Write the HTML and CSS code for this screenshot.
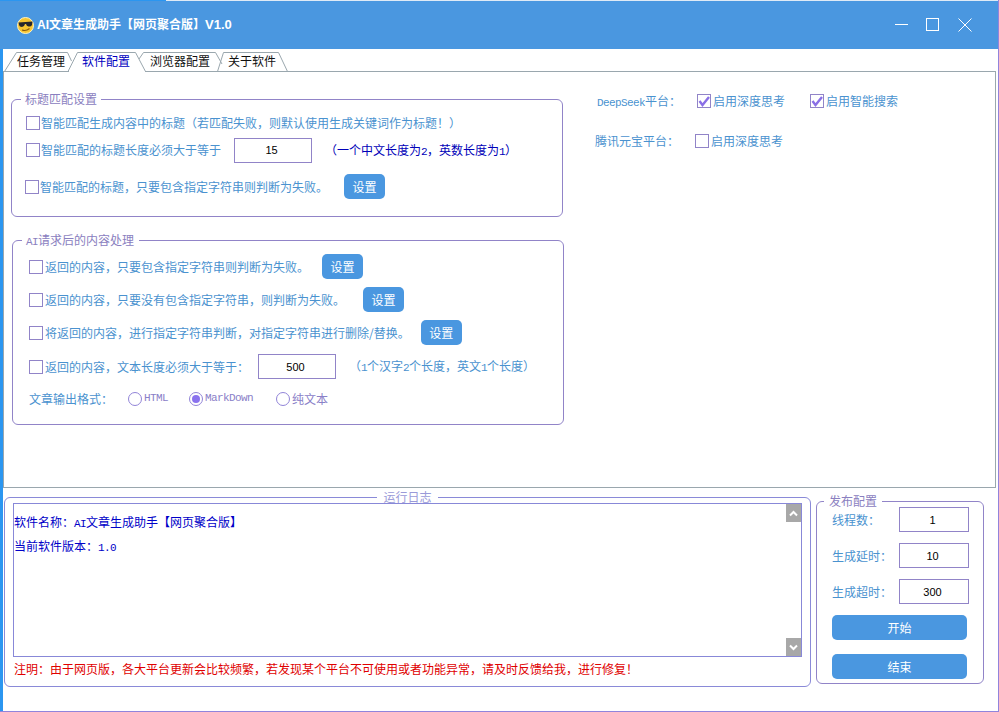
FILE: index.html
```html
<!DOCTYPE html>
<html lang="zh-CN">
<head>
<meta charset="utf-8">
<title>AI文章生成助手</title>
<link rel="stylesheet" href="styles.css">
</head>
<body>
<div class="window">
  <div class="topline"></div>
  <header class="titlebar">
    <svg class="app-icon" width="17" height="17" viewBox="0 0 17 17">
      <circle cx="8.5" cy="8.5" r="8" fill="#f7c531" stroke="#fff3c4" stroke-width="1"/>
      <path d="M1.5 5.5 L15.5 4.5 L15 8 Q14 10 11.5 9.5 Q9.5 9 9 7 L8 7 Q7.5 9.5 5 10 Q2.5 10 2 8 Z" fill="#26262c"/>
      <path d="M5 13 Q9 14.5 12.5 11.5" fill="none" stroke="#8a5a10" stroke-width="1.2"/>
    </svg>
    <h1 class="app-title"><span>AI文章生成助手【网页聚合版】</span><span class="version">V1.0</span></h1>
    <div class="win-controls">
      <svg width="13" height="14" viewBox="0 0 13 14"><path d="M0 6.5H13" stroke="#fff" fill="none"/></svg>
      <svg width="14" height="14" viewBox="0 0 14 14"><rect x="0.5" y="0.5" width="12" height="12" stroke="#fff" fill="none"/></svg>
      <svg width="14" height="14" viewBox="0 0 14 14"><path d="M0.5 0.5L13.5 13.5M13.5 0.5L0.5 13.5" stroke="#fff" fill="none"/></svg>
    </div>
  </header>

  <div class="content">
    <nav class="tabs">
      <svg class="tab-shapes" width="292" height="22" viewBox="0 0 292 22">
        <path d="M1.5 21.5L13.5 2.5H64.5L68.5 11M65 21.5L74.5 2.5H132.5L142.5 21.5" fill="none" stroke="#9aa7ae"/>
        <path d="M136 9L140.5 2.5H212.5L219 14M214.5 21.5L220.5 2.5H275.5L284.5 21.5" fill="none" stroke="#9aa7ae"/>
        <path d="M66 21.5H142" stroke="#fff" fill="none"/>
        <path d="M1 21.5H66" stroke="#9aa7ae" fill="none"/>
      </svg>
      <span class="tab tab-1">任务管理</span>
      <span class="tab tab-2 active">软件配置</span>
      <span class="tab tab-3">浏览器配置</span>
      <span class="tab tab-4">关于软件</span>
    </nav>

    <section class="panel">
      <div class="left-col">
        <fieldset class="group group-title">
          <legend><span>标题匹配设置</span></legend>
          <div class="row r-24">
            <label class="check"><i class="box"></i>智能匹配生成内容中的标题（若匹配失败，则默认使用生成关键词作为标题！）</label>
          </div>
          <div class="row r-24 mt-3">
            <label class="check"><i class="box"></i>智能匹配的标题长度必须大于等于</label>
            <span class="field ml-13 w-78">15</span>
            <span class="note navy ml-13">（一个中文长度为<span class="mono">2</span>，英数长度为<span class="mono">1</span>）</span>
          </div>
          <div class="row r-25 mt-12 out-1">
            <label class="check"><i class="box"></i>智能匹配的标题，只要包含指定字符串则判断为失败。</label>
            <button class="btn ml-16">设置</button>
          </div>
        </fieldset>

        <fieldset class="group group-ai">
          <legend><span><span class="mono">AI</span>请求后的内容处理</span></legend>
          <div class="row r-25">
            <label class="check"><i class="box"></i>返回的内容，只要包含指定字符串则判断为失败。</label>
            <button class="btn ml-13">设置</button>
          </div>
          <div class="row r-25 mt-8">
            <label class="check"><i class="box"></i>返回的内容，只要没有包含指定字符串，则判断为失败。</label>
            <button class="btn ml-18">设置</button>
          </div>
          <div class="row r-25 mt-8">
            <label class="check"><i class="box"></i>将返回的内容，进行指定字符串判断，对指定字符串进行删除/替换。</label>
            <button class="btn ml-11">设置</button>
          </div>
          <div class="row r-25 mt-9">
            <label class="check"><i class="box"></i>返回的内容，文本长度必须大于等于：</label>
            <span class="field ml-9 w-78">500</span>
            <span class="note ml-13">（<span class="mono">1</span>个汉字<span class="mono">2</span>个长度，英文<span class="mono">1</span>个长度）</span>
          </div>
          <div class="row r-25 mt-7">
            <span class="fmt-label">文章输出格式：</span>
            <label class="radio"><i class="dot"></i><span class="mono">HTML</span></label>
            <label class="radio md"><i class="dot on"></i><span class="mono">MarkDown</span></label>
            <label class="radio txt"><i class="dot"></i>纯文本</label>
          </div>
        </fieldset>
      </div>

      <div class="right-col">
        <div class="platform ds">
          <span class="plat-label"><span class="mono">DeepSeek</span>平台：</span>
          <label class="check"><i class="box on"><svg width="12" height="12" viewBox="0 0 12 12"><path d="M1.5 6L4.5 10L11 2" fill="none" stroke="#8a6fe6" stroke-width="2.4"/></svg></i>启用深度思考</label>
          <label class="check ml-25"><i class="box on"><svg width="12" height="12" viewBox="0 0 12 12"><path d="M1.5 6L4.5 10L11 2" fill="none" stroke="#8a6fe6" stroke-width="2.4"/></svg></i>启用智能搜索</label>
        </div>
        <div class="platform yb">
          <span class="plat-label">腾讯元宝平台：</span>
          <label class="check"><i class="box"></i>启用深度思考</label>
        </div>
      </div>
    </section>

    <div class="bottom">
      <fieldset class="log">
        <legend><span>运行日志</span></legend>
        <div class="log-box">
          <div class="log-text">
            <p>软件名称：<span class="mono">AI</span>文章生成助手【网页聚合版】</p>
            <p>当前软件版本：<span class="mono">1.0</span></p>
          </div>
          <div class="scrollbar">
            <span class="sb-btn"><svg width="9" height="7" viewBox="0 0 9 7"><path d="M1 5.5L4.5 2L8 5.5" fill="none" stroke="#fff" stroke-width="2"/></svg></span>
            <span class="sb-btn"><svg width="9" height="7" viewBox="0 0 9 7"><path d="M1 1.5L4.5 5L8 1.5" fill="none" stroke="#fff" stroke-width="2"/></svg></span>
          </div>
        </div>
        <p class="warning">注明：由于网页版，各大平台更新会比较频繁，若发现某个平台不可使用或者功能异常，请及时反馈给我，进行修复！</p>
      </fieldset>

      <fieldset class="publish">
        <legend><span>发布配置</span></legend>
        <div class="pub-row"><span class="pub-label">线程数：</span><span class="field w-70">1</span></div>
        <div class="pub-row"><span class="pub-label">生成延时：</span><span class="field w-70">10</span></div>
        <div class="pub-row"><span class="pub-label">生成超时：</span><span class="field w-70">300</span></div>
        <button class="btn wide">开始</button>
        <button class="btn wide second">结束</button>
      </fieldset>
    </div>
  </div>
</div>
</body>
</html>
```

FILE: styles.css
```css
* { box-sizing: border-box; }
html, body { margin: 0; padding: 0; overflow: hidden; background: #fff; }
body {
  font-family: "Noto Sans CJK SC", "Liberation Sans", sans-serif;
  font-size: 12px;
  line-height: 14px;
  color: #4a92cf;
}
p, h1 { margin: 0; }
i { font-style: normal; }

.window {
  width: 999px;
  height: 712px;
  display: flex;
  flex-direction: column;
  border-right: 1px solid #9184dc;
  border-bottom: 1px solid #9184dc;
}
.topline {
  height: 1px;
  flex: none;
  background: linear-gradient(to right, #2b96f0 166px, #dfeaf6 166px);
}
.titlebar {
  height: 48px;
  flex: none;
  background: #4a97e0;
  display: flex;
  align-items: center;
  padding-left: 17px;
  color: #fff;
}
.app-icon { flex: none; }
.app-title {
  margin-left: 3px;
  font-family: "Liberation Sans", "Noto Sans CJK SC", sans-serif;
  font-size: 12px;
  font-weight: 700;
  display: flex;
}
.version { font-size: 13px; }
.win-controls {
  margin-left: auto;
  margin-right: 26px;
  display: flex;
  gap: 18px;
  align-items: center;
}

.content {
  flex: 1;
  border-left: 3px solid #2b96f0;
  display: flex;
  flex-direction: column;
}

.tabs {
  height: 23px;
  flex: none;
  margin-bottom: -1px;
  display: flex;
  align-items: center;
  position: relative;
  z-index: 1;
  color: #111;
  padding-top: 1px;
}
.tab-shapes { position: absolute; left: 0; top: 1px; }
.tab { position: relative; }
.tab-1 { margin-left: 14px; }
.tab-2 { margin-left: 17px; color: #0000c0; }
.tab-3 { margin-left: 20px; }
.tab-4 { margin-left: 18px; }

.panel {
  width: 993px;
  height: 417px;
  flex: none;
  border: 1px solid #9aa7ae;
  display: flex;
  padding: 20px 0 0 7px;
}
.left-col { width: 553px; flex: none; }
.right-col { margin-left: 30px; padding-top: 0; }

legend { padding: 0; }
fieldset { margin: 0; min-width: 0; }

.group {
  border: 1px solid #9184c8;
  border-radius: 6px;
  padding-bottom: 0;
  padding-right: 0;
}
.group legend { color: #8a80c0; }
.group-title {
  width: 552px;
  height: 125px;
  padding-left: 14px;
  padding-top: 5px;
}
.group-title legend { margin-left: -5px; padding: 0 4px; }
.group-title .check { gap: 1px; }
.group-ai {
  width: 552px;
  height: 192px;
  margin: 16px 0 0 1px;
  padding-left: 16px;
  padding-top: 6px;
}
.group-ai legend { margin-left: -7px; padding: 0 5px 0 4px; }

.row { display: flex; align-items: center; }
.r-24 { height: 24px; }
.r-25 { height: 25px; }
.out-1 { margin-left: -1px; }
.mt-3 { margin-top: 3px; }
.mt-7 { margin-top: 7px; }
.mt-8 { margin-top: 8px; }
.mt-9 { margin-top: 9px; }
.mt-12 { margin-top: 12px; }
.ml-9 { margin-left: 9px; }
.ml-11 { margin-left: 11px; }
.ml-13 { margin-left: 13px; }
.ml-16 { margin-left: 16px; }
.ml-18 { margin-left: 18px; }
.ml-25 { margin-left: 25px; }

.check { display: flex; align-items: center; gap: 2px; white-space: nowrap; }
.box {
  width: 14px;
  height: 14px;
  flex: none;
  border: 1px solid #9184c8;
  display: flex;
  align-items: center;
  justify-content: center;
}

.field {
  height: 25px;
  flex: none;
  border: 1px solid #9184c8;
  padding-right: 3px;
  display: flex;
  align-items: center;
  justify-content: center;
  font-family: "Liberation Sans", sans-serif;
  font-size: 11px;
  color: #000;
}
.w-78 { width: 78px; }
.w-70 { width: 70px; }

.note { white-space: nowrap; }
.navy { color: #0000b8; }
.mono {
  font-family: "Liberation Mono", monospace;
  font-size: 11px;
  letter-spacing: -0.6px;
  line-height: 1;
}

.btn {
  width: 41px;
  height: 25px;
  flex: none;
  padding: 0;
  border: 0;
  border-radius: 5px;
  background: #4a97e0;
  color: #fff;
  font: inherit;
}

.fmt-label { width: 99px; flex: none; }
.radio { display: flex; align-items: center; gap: 2px; color: #8a80c8; }
.md { margin-left: 21px; }
.txt { margin-left: 23px; }
.dot {
  width: 14px;
  height: 14px;
  flex: none;
  border: 1.5px solid #9184d8;
  border-radius: 50%;
  display: flex;
  align-items: center;
  justify-content: center;
}
.dot.on::after {
  content: "";
  width: 8px;
  height: 8px;
  border-radius: 50%;
  background: #8a72ee;
}

.platform { display: flex; align-items: center; height: 20px; white-space: nowrap; }
.plat-label { width: 100px; flex: none; }
.ds { margin: -1px 0 0 3px; }
.yb { margin: 20px 0 0 1px; }

.bottom {
  display: flex;
  align-items: flex-start;
  padding: 3px 0 0 1px;
}
.log {
  width: 807px;
  height: 196px;
  flex: none;
  border: 1px solid #8a8ad8;
  border-radius: 6px;
  padding: 0 8px 0;
}
.log legend {
  margin: 0 auto;
  padding: 0 6px;
  line-height: 12px;
  color: #9a9ad8;
}
.log-box {
  height: 154px;
  border: 1px solid #8888d8;
  display: flex;
}
.log-text { flex: 1; padding-top: 6px; color: #0000c8; }
.log-text p { line-height: 24px; }
.scrollbar {
  width: 15px;
  flex: none;
  display: flex;
  flex-direction: column;
  justify-content: space-between;
}
.sb-btn {
  height: 18px;
  background: #a8a8a8;
  display: flex;
  align-items: center;
  justify-content: center;
}
.warning { line-height: 24px; padding-left: 1px; color: #e00000; white-space: nowrap; }

.publish {
  width: 168px;
  height: 189px;
  flex: none;
  margin: 4px 0 0 5px;
  border: 1px solid #9184c8;
  border-radius: 6px;
  padding: 0 0 0 15px;
}
.publish legend {
  margin-left: -8px;
  padding: 0 5px;
  line-height: 12px;
  color: #8a80c0;
}
.pub-row { display: flex; align-items: center; height: 25px; margin-bottom: 11px; }
.pub-label { width: 67px; flex: none; }
.wide { display: block; width: 135px; }
.second { margin-top: 14px; }
```
